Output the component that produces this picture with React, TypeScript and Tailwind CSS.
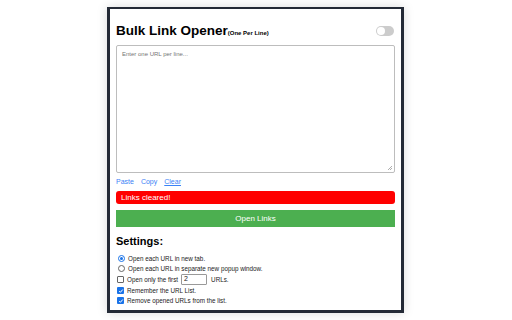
import React from "react";

const Check = () => (
  <span className="w-[7px] h-[7px] rounded-[1px] bg-[#1a73e8] flex items-center justify-center shrink-0">
    <svg width="6" height="6" viewBox="0 0 6 6"><path d="M1.2 3 L2.4 4.3 L4.8 1.5" stroke="white" strokeWidth="1" fill="none" /></svg>
  </span>
);

export default function App() {
  return (
    <div className="w-[512px] h-[320px] bg-white overflow-hidden" style={{ fontFamily: '"Liberation Sans", Arial, sans-serif' }}>
      <div className="pl-[107px] pt-[7px]">
        <div className="w-[297px] h-[306px] border-t-2 border-x-[3px] border-b-[3px] border-[#242a36] bg-white shadow-[0_0_10px_rgba(0,0,0,0.15)] px-[6px] pt-[12px]">
          <div className="flex items-center justify-between h-[20px]">
            <div className="flex items-end">
              <span className="text-[13.5px] font-bold text-black leading-[16px]">Bulk Link Opener</span>
              <span className="text-[6px] font-bold text-black leading-[9px] mb-[1px]">(One Per Line)</span>
            </div>
            <div className="w-[18px] h-[10px] rounded-full bg-[#cccccc] flex items-center px-[1px] mr-[1px]">
              <div className="w-[8px] h-[8px] rounded-full bg-white" />
            </div>
          </div>
          <div className="mt-[4px] h-[128px] border border-[#bdbdbd] rounded-[2px] relative px-[5px] pt-[4px]">
            <div className="text-[6px] text-[#757575] leading-[8px]">Enter one URL per line...</div>
            <svg className="absolute right-[1px] bottom-[1px]" width="6" height="6" viewBox="0 0 6 6">
              <path d="M5 1 L1 5 M5 3 L3 5" stroke="#999" strokeWidth="0.8" />
            </svg>
          </div>
          <div className="flex gap-[7px] mt-[4px] text-[7px] text-[#3b82f6] leading-[10px]">
            <span>Paste</span>
            <span>Copy</span>
            <span className="underline">Clear</span>
          </div>
          <div className="mt-[4px] h-[13px] bg-[#ff0000] rounded-[3px] flex items-center px-[5px]">
            <span className="text-[8px] text-white font-medium">Links cleared!</span>
          </div>
          <div className="mt-[6px] h-[17px] bg-[#4caf50] flex items-center justify-center">
            <span className="text-[8px] text-white">Open Links</span>
          </div>
          <div className="mt-[7px] text-[11px] font-bold text-black leading-[14px]">Settings:</div>
          <div className="mt-[6px] flex flex-col text-[6.3px] text-[#222] gap-[1px]">
            <div className="flex items-center h-[9px] gap-[3px] pl-[2px]">
              <span className="w-[7px] h-[7px] rounded-full border border-[#1a73e8] flex items-center justify-center shrink-0">
                <span className="w-[3px] h-[3px] rounded-full bg-[#1a73e8]" />
              </span>
              <span>Open each URL in new tab.</span>
            </div>
            <div className="flex items-center h-[9px] gap-[3px] pl-[2px]">
              <span className="w-[7px] h-[7px] rounded-full border border-[#666] shrink-0" />
              <span>Open each URL in separate new popup window.</span>
            </div>
            <div className="flex items-center h-[11px] gap-[3px] pl-[1px]">
              <span className="w-[7px] h-[7px] rounded-[1px] border border-[#666] shrink-0" />
              <span>Open only the first</span>
              <span className="w-[26px] h-[11px] border border-[#999] rounded-[1px] flex items-center px-[2px] text-[7px]">2</span>
              <span className="ml-[1px]">URLs.</span>
            </div>
            <div className="flex items-center h-[9px] gap-[3px] pl-[1px]">
              <Check />
              <span>Remember the URL List.</span>
            </div>
            <div className="flex items-center h-[9px] gap-[3px] pl-[1px]">
              <Check />
              <span>Remove opened URLs from the list.</span>
            </div>
          </div>
        </div>
      </div>
    </div>
  );
}
